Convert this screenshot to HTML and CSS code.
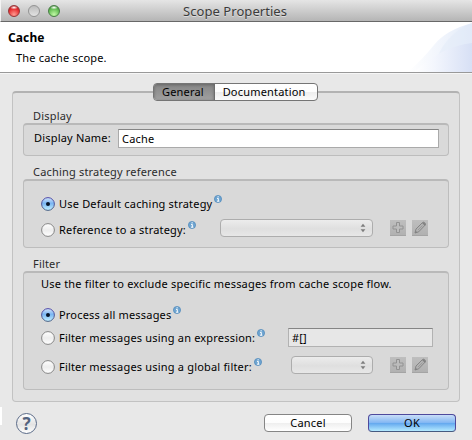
FILE: index.html
```html
<!DOCTYPE html>
<html lang="en">
<head>
<meta charset="utf-8">
<title>Scope Properties</title>
<link rel="stylesheet" href="styles.css">
</head>
<body>
<svg class="defs" width="0" height="0">
  <defs>
    <linearGradient id="knob" x1="0" y1="0" x2="0" y2="1"><stop offset="0" stop-color="#fff"/><stop offset=".5" stop-color="#ededed"/><stop offset="1" stop-color="#fff"/></linearGradient>
    <linearGradient id="blue" x1="0" y1="0" x2="0" y2="1"><stop offset="0" stop-color="#d3e4fa"/><stop offset=".45" stop-color="#79b5f2"/><stop offset="1" stop-color="#c4f2ff"/></linearGradient>
    <linearGradient id="ring" x1="0" y1="0" x2="0" y2="1"><stop offset="0" stop-color="#5149a8"/><stop offset="1" stop-color="#4c6184"/></linearGradient>
    <symbol id="off" viewBox="0 0 14 14"><circle cx="7" cy="7" r="6.4" fill="url(#knob)" stroke="#858585" stroke-width="1"/></symbol>
    <symbol id="on" viewBox="0 0 14 14"><circle cx="7" cy="7" r="6.4" fill="url(#blue)" stroke="url(#ring)"/><circle cx="7" cy="7" r="2" fill="#071426"/></symbol>
    <symbol id="info" viewBox="0 0 8 8"><circle cx="4" cy="4" r="3.6" fill="#6fa5d1" stroke="#417fb5" stroke-width=".6"/><path d="M3 3.4h1.3v2.8M2.9 6.2h2.5M3.6 1.8h1.1" fill="none" stroke="#fff" stroke-width="1"/></symbol>
    <symbol id="plus" viewBox="0 0 16 16"><path d="M6.500 2.500h3v3.500h3.500v3h-3.500v3.500h-3v-3.500h-3.500v-3h3.500z" fill="#bcbcbc" stroke="#929292"/></symbol>
    <symbol id="pencil" viewBox="0 0 16 16"><path d="M3 13l1-4 6.500-6.500q1.200-.8 2.300.3t.3 2.300L6.700 11.800z" fill="#b2b2b2" stroke="#858585"/><path d="M10 3l3 3 .7-1.700-2-2zM3 13l.7-2.300 1.600 1.600z" fill="#808080"/><path d="M6 10l4.500-4.500" stroke="#929292" stroke-width=".7"/></symbol>
    <symbol id="arrows" viewBox="0 0 6 10"><path d="M.6 3.800L3 .8l2.400 3zM.6 6.200L3 9.200l2.400-3z" fill="#7d7d7d"/></symbol>
  </defs>
</svg>
<div class="window">
  <div class="titlebar">
    <div class="lights"><i class="light red"></i><i class="light gray"></i><i class="light green"></i></div>
    <span class="title">Scope Properties</span>
  </div>
  <header class="header">
    <svg class="swoosh" width="72" height="50" viewBox="0 0 72 50">
      <defs>
        <linearGradient id="s1"><stop offset="0" stop-color="#fff"/><stop offset="1" stop-color="#e3ebf9"/></linearGradient>
        <linearGradient id="s2"><stop offset="0" stop-color="#fff"/><stop offset=".35" stop-color="#f3f6fd"/><stop offset="1" stop-color="#d7e0f5"/></linearGradient>
      </defs>
      <path d="M8 50Q22 38 34 23T72 1V50z" fill="url(#s1)"/>
      <path d="M32 50Q42 12 72 1V50z" fill="#dfe8f8" opacity=".4"/>
      <path d="M14 50Q40 25 72 21V50z" fill="url(#s2)"/>
    </svg>
    <h1>Cache</h1>
    <p>The cache scope.</p>
  </header>
  <main class="content">
    <div class="panel">
      <div class="tabs"><span class="tab active">General</span><span class="tab docs">Documentation</span></div>
      <h2>Display</h2>
      <section class="group display">
        <label class="name">Display Name:</label><div class="field">Cache</div>
      </section>
      <h2 class="caching">Caching strategy reference</h2>
      <section class="group strategy">
        <div class="row first"><svg class="radio"><use href="#on"/></svg><span class="t-default">Use Default caching strategy</span><svg class="info"><use href="#info"/></svg></div>
        <div class="row"><svg class="radio"><use href="#off"/></svg><span class="t-ref">Reference to a strategy:</span><svg class="info"><use href="#info"/></svg>
          <div class="controls"><div class="select wide"><svg class="arrows"><use href="#arrows"/></svg></div><span class="tool"><svg><use href="#plus"/></svg></span><span class="tool"><svg><use href="#pencil"/></svg></span></div></div>
      </section>
      <h2 class="filter">Filter</h2>
      <section class="group filters">
        <p class="hint">Use the filter to exclude specific messages from cache scope flow.</p>
        <div class="row all"><svg class="radio"><use href="#on"/></svg><span class="t-all">Process all messages</span><svg class="info"><use href="#info"/></svg></div>
        <div class="row expr"><svg class="radio"><use href="#off"/></svg><span class="t-expr">Filter messages using an expression:</span><svg class="info"><use href="#info"/></svg><div class="expression">#[]</div></div>
        <div class="row global"><svg class="radio"><use href="#off"/></svg><span class="t-global">Filter messages using a global filter:</span><svg class="info"><use href="#info"/></svg>
          <div class="controls"><div class="select"><svg class="arrows"><use href="#arrows"/></svg></div><span class="tool"><svg><use href="#plus"/></svg></span><span class="tool"><svg><use href="#pencil"/></svg></span></div></div>
      </section>
    </div>
  </main>
  <footer class="footer">
    <i class="edge"></i><span class="help">?</span>
    <span class="button">Cancel</span><span class="button ok">OK</span>
  </footer>
</div>
</body>
</html>
```
FILE: styles.css
```css
* { box-sizing: border-box; }
body { margin: 0; font: 11px/14px "Noto Sans", "Open Sans", sans-serif; letter-spacing: .19px; color: #000; white-space: nowrap; }
h1, h2, p { margin: 0; font-size: 11px; }
svg { display: block; flex: none; }
.defs { position: absolute; }
.window { width: 472px; height: 440px; background: #e8e8e8; overflow: hidden; }
.titlebar { height: 22px; display: flex; align-items: center; background: linear-gradient(#e5e5e5, #b5b5b5); border-bottom: 1px solid #686868; border-left: 1px solid #f4f4f4; border-top-right-radius: 4px; }
.lights { display: flex; gap: 8px; padding-left: 7px; width: 182px; }
.light { width: 12px; height: 12px; border-radius: 50%; border: 1px solid #858585; }
.red { background: radial-gradient(ellipse 4px 2px at 50% 15%, #fff, transparent), radial-gradient(circle at 50% 85%, #ff9c92, #e62c2e 60%, #a71c20); border-color: #963638; }
.gray { background: linear-gradient(#bcbcbc, #e3e3e3); border-color: #939393; }
.green { background: radial-gradient(ellipse 4px 2px at 50% 15%, #fff, transparent), radial-gradient(circle at 50% 85%, #c2f9a6, #64bd53 60%, #347c30); border-color: #487d45; }
.title { font-size: 13px; line-height: 18px; color: #3b3b3b; text-shadow: 0 1px 0 #ddd; letter-spacing: .06px; }
.header { position: relative; height: 51px; padding: 8px 0 0 8px; background: #fff; border-bottom: 1px solid #999; }
.header h1 { font-size: 12px; line-height: 16px; letter-spacing: .1px; }
.header p { padding: 5px 0 0 8px; font-weight: 400; }
.swoosh { position: absolute; right: 0; top: 0; }
.content { padding: 17px 12px 0; height: 329px; border-top: 1px solid #f6f6f6; }
.panel { height: 311px; border: 1px solid #c2c2c2; border-top: 2px solid #b2b2b2; border-radius: 4px; background: #e1e1e1; padding: 0 10px; }
.tabs { width: 165px; height: 18px; margin: -10px 0 0 130px; display: flex; border: 1px solid #757575; border-radius: 4px; overflow: hidden; background: linear-gradient(#fff, #fdfdfd 48%, #eee 52%, #fbfbfb); }
.tab { width: 103px; padding-left: 8px; line-height: 16px; }
.tab.active { width: 61px; padding-left: 8px; background: linear-gradient(#858585, #a0a0a0); box-shadow: inset 0 1px 3px #686868; border-right: 1px solid #6e6e6e; }
h2 { height: 14px; margin: 8px 0 0 10px; font-weight: 400; color: #2b2b2b; }
h2.caching { margin-top: 9px; }
h2.filter { margin-top: 9px; }
.group { border: 1px solid #bdbdbd; border-top: 2px solid #b9b9b9; border-radius: 4px; background: #d9d9d9; }
.display { height: 33px; display: flex; padding: 4px 9px 0 10px; }
.name { width: 84px; line-height: 18px; }
.field { flex: 1; height: 19px; padding-left: 3px; line-height: 18px; background: #fff; border: 1px solid #aaa; border-top-color: #858585; }
.strategy { height: 69px; padding: 14px 20px 0 17px; }
.filters { height: 119px; padding: 4px 20px 0 17px; }
.row { height: 18px; display: flex; align-items: center; }
.row.first { margin-bottom: 8px; }
.radio { width: 14px; height: 14px; margin-right: 4px; }
.info { width: 8px; height: 8px; margin: -11px 0 0 2px; }
.controls { margin-left: auto; display: flex; align-items: flex-start; height: 18px; }
.select { width: 82px; height: 18px; margin: -2px 17px 0 0; border: 1px solid #adadad; border-radius: 4px; background: linear-gradient(#ececec, #dfdfdf 55%, #e7e7e7); display: flex; align-items: center; justify-content: flex-end; padding-right: 6px; }
.select.wide { width: 153px; }
.arrows { width: 6px; height: 10px; }
.tool { width: 16px; height: 16px; margin-top: -1px; background: linear-gradient(#bebebe, #b1b1b1); border-bottom: 1px solid #a4a4a4; }
.tool + .tool { margin-left: 6px; }
.tool svg { width: 16px; height: 16px; }
.hint { height: 14px; font-weight: 400; }
.all { margin-top: 15px; }
.expr { margin-top: 5px; }
.global { margin-top: 11px; }
.expression { width: 145px; height: 19px; margin: 0 -5px 1px auto; padding-left: 3px; line-height: 17px; background: #e7e7e7; border: 1px solid #b2b2b2; border-top-color: #858585; }
.footer { height: 38px; display: flex; align-items: flex-start; padding: 12px 16px 0 0; gap: 16px; }
.edge { width: 2px; height: 18px; margin-top: -7px; background: #fff; }
.help { width: 21px; height: 21px; margin: -1px auto 0 -2px; border: 1px solid #5b6b88; border-radius: 50%; background: linear-gradient(#fff, #e3e3e3 55%, #fff); color: #53637f; font: bold 17px/19px "Noto Sans", sans-serif; text-align: center; letter-spacing: 0; }
.button { width: 88px; height: 18px; border: 1px solid #858585; border-radius: 4px; text-align: center; line-height: 16px; background: linear-gradient(#fff, #fdfdfd 48%, #efefef 52%, #fff); }
.ok { border-color: #4e4a9c; border-bottom-color: #465a80; background: linear-gradient(#c9def8, #83b7f3 48%, #64a9ef 52%, #b4eaff); }
```
